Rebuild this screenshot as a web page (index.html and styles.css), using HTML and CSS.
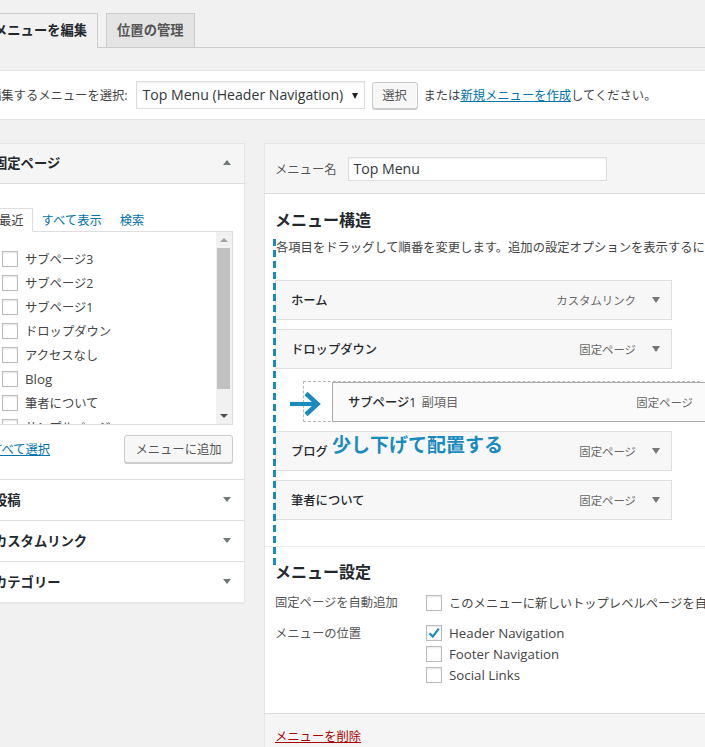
FILE: index.html
```html
<!DOCTYPE html>
<html lang="ja">
<head>
<meta charset="utf-8">
<title>メニュー</title>
<link rel="stylesheet" href="styles.css">
</head>
<body>
<div class="wrap">
  <div class="tabs">
    <a class="tab active">メニューを編集</a>
    <a class="tab">位置の管理</a>
  </div>

  <div class="manage">
    <span class="manage-label">編集するメニューを選択:</span>
    <div class="select">Top Menu (Header Navigation)<span class="select-arrow"></span></div>
    <span class="btn btn-select">選択</span>
    <span class="manage-text">または<a class="link">新規メニューを作成</a>してください。</span>
  </div>

  <div class="columns">
    <div class="side">
      <div class="acc">
        <div class="acc-title open">固定ページ<span class="caret up"></span></div>
        <div class="acc-content">
          <div class="ptabs">
            <span class="ptab active">最近</span>
            <a class="ptab">すべて表示</a>
            <a class="ptab">検索</a>
          </div>
          <div class="plist">
            <ul class="plist-items">
              <li><span class="cb"></span>サブページ3</li>
              <li><span class="cb"></span>サブページ2</li>
              <li><span class="cb"></span>サブページ1</li>
              <li><span class="cb"></span>ドロップダウン</li>
              <li><span class="cb"></span>アクセスなし</li>
              <li class="en"><span class="cb"></span>Blog</li>
              <li><span class="cb"></span>筆者について</li>
              <li><span class="cb"></span>サンプルページ</li>
            </ul>
            <div class="scrollbar">
              <div class="sb-btn"><span class="sb-up"></span></div>
              <div class="sb-thumb"></div>
              <div class="sb-btn sb-bottom"><span class="sb-down"></span></div>
            </div>
          </div>
          <div class="pactions">
            <a class="link">すべて選択</a>
            <span class="btn btn-add">メニューに追加</span>
          </div>
        </div>
      </div>
      <div class="acc"><div class="acc-title">投稿<span class="caret"></span></div></div>
      <div class="acc"><div class="acc-title">カスタムリンク<span class="caret"></span></div></div>
      <div class="acc last"><div class="acc-title">カテゴリー<span class="caret"></span></div></div>
    </div>

    <div class="main">
      <div class="main-header">
        <span class="name-label">メニュー名</span>
        <div class="name-input">Top Menu</div>
      </div>
      <div class="main-body">
        <div class="structure">
          <h3 class="heading">メニュー構造</h3>
          <p class="desc">各項目をドラッグして順番を変更します。追加の設定オプションを表示するには、項目の右側にある矢印をクリックしてください。</p>
          <ul class="menu">
            <li class="item"><span class="item-title">ホーム</span><span class="item-type">カスタムリンク</span><span class="item-arrow"></span></li>
            <li class="item"><span class="item-title">ドロップダウン</span><span class="item-type">固定ページ</span><span class="item-arrow"></span></li>
            <li class="drag-row">
              <div class="placeholder"></div>
              <div class="item dragged"><span class="item-title">サブページ1 <span class="sub">副項目</span></span><span class="item-type">固定ページ</span><span class="item-arrow"></span></div>
            </li>
            <li class="item after-drag"><span class="item-title">ブログ</span><span class="item-type">固定ページ</span><span class="item-arrow"></span></li>
            <li class="item"><span class="item-title">筆者について</span><span class="item-type">固定ページ</span><span class="item-arrow"></span></li>
          </ul>
        </div>
        <div class="settings">
          <h3 class="heading">メニュー設定</h3>
          <div class="set-row first">
            <span class="set-label">固定ページを自動追加</span>
            <div class="set-opts">
              <div class="opt"><span class="cb"></span>このメニューに新しいトップレベルページを自動的に追加</div>
            </div>
          </div>
          <div class="set-row">
            <span class="set-label">メニューの位置</span>
            <div class="set-opts">
              <div class="opt en"><span class="cb checked"><svg viewBox="0 0 16 16" width="16" height="16"><path d="M3.5 8.2 L6.8 11.6 L12.8 3.6" fill="none" stroke="#1e8cbe" stroke-width="2.2"/></svg></span>Header Navigation</div>
              <div class="opt en"><span class="cb"></span>Footer Navigation</div>
              <div class="opt en"><span class="cb"></span>Social Links</div>
            </div>
          </div>
        </div>

        <div class="dash-guide"></div>
        <svg class="guide-arrow" viewBox="0 0 32 26" width="32" height="26"><path d="M1 13 H27" stroke="#1a8bbd" stroke-width="4.2" fill="none"/><path d="M17 2.5 L28.5 13 L17 23.5" stroke="#1a8bbd" stroke-width="4.5" fill="none"/></svg>
        <div class="guide-note">少し下げて配置する</div>
      </div>
      <div class="main-footer"><a class="delete">メニューを削除</a></div>
    </div>
  </div>
</div>
</body>
</html>
```

FILE: styles.css
```css
* { box-sizing: border-box; }
html, body { margin: 0; padding: 0; overflow: hidden; }
body {
  width: 705px;
  height: 747px;
  background: #f1f1f1;
  font-family: "Open Sans", "Noto Sans CJK JP", sans-serif;
  font-size: 12.3px;
  color: #444;
}
ul { list-style: none; margin: 0; padding: 0; }
.link { color: #0073aa; text-decoration: underline; }
.en { font-size: 13.3px; }

.wrap { margin-left: -20px; width: 820px; }

/* top tabs */
.tabs {
  display: flex;
  align-items: flex-start;
  height: 48px;
  padding: 13px 0 0 3px;
  border-bottom: 1px solid #ccc;
}
.tab {
  height: 34px;
  line-height: 33px;
  padding: 0 10px;
  border: 1px solid #ccc;
  border-bottom: none;
  background: #e4e4e4;
  font-size: 13.3px;
  font-weight: 700;
  color: #555;
}
.tab.active {
  height: 35px;
  background: #f1f1f1;
  color: #23282d;
}
.tab + .tab { margin-left: 8px; }

/* manage bar */
.manage {
  display: flex;
  align-items: center;
  height: 50px;
  margin-top: 22px;
  padding-left: 9px;
  background: #fff;
  border-top: 1px solid #e5e5e5;
  border-bottom: 1px solid #e5e5e5;
  white-space: nowrap;
}
.select {
  position: relative;
  width: 229px;
  height: 28px;
  margin-left: 8px;
  padding-left: 6px;
  line-height: 26px;
  font-size: 14.1px;
  color: #32373c;
  background: #fff;
  border: 1px solid #ddd;
  box-shadow: inset 0 1px 2px rgba(0,0,0,.07);
}
.select-arrow {
  position: absolute;
  right: 6px;
  top: 11px;
  border-left: 3.5px solid transparent;
  border-right: 3.5px solid transparent;
  border-top: 6px solid #222;
}
.btn {
  display: inline-flex;
  align-items: center;
  justify-content: center;
  height: 27px;
  background: #f7f7f7;
  border: 1px solid #ccc;
  border-radius: 3px;
  box-shadow: 0 1px 0 #ccc;
  color: #555;
  font-size: 12.3px;
}
.btn-select { width: 46px; margin-left: 7px; }
.manage-text { margin-left: 6px; }

/* columns */
.columns {
  display: flex;
  align-items: flex-start;
  margin-top: 23px;
}
.side {
  width: 265px;
  flex: none;
  background: #fff;
  border: 1px solid #e5e5e5;
  box-shadow: 0 1px 1px rgba(0,0,0,.04);
}
.acc { border-bottom: 1px solid #ddd; }
.acc.last { border-bottom: none; }
.acc-title {
  display: flex;
  align-items: center;
  justify-content: space-between;
  height: 40px;
  padding: 0 13px 1px 13px;
  font-size: 13.3px;
  font-weight: 700;
  color: #23282d;
  background: #fff;
}
.acc-title.open {
  height: 40px;
  padding-bottom: 2px;
  background: #f5f5f5;
  border-bottom: 1px solid #ddd;
}
.caret {
  width: 0; height: 0;
  border-left: 4px solid transparent;
  border-right: 4px solid transparent;
  border-top: 5px solid #72777c;
}
.caret.up {
  border-top: none;
  border-bottom: 5px solid #72777c;
}
.acc-content {
  padding: 24px 11px 16px 9px;
}
.ptabs {
  display: flex;
  height: 24px;
  position: relative;
  z-index: 1;
}
.ptab {
  height: 24px;
  line-height: 23px;
  padding: 0 8px;
  color: #0073aa;
  border: 1px solid transparent;
}
.ptab.active {
  color: #444;
  background: #fff;
  border-color: #ddd;
  border-bottom-color: #fff;
}
.plist {
  display: flex;
  height: 194px;
  margin-top: -1px;
  border: 1px solid #ddd;
  overflow: hidden;
}
.plist-items {
  flex: 1;
  padding: 15px 0 0 11px;
}
.plist-items li {
  display: flex;
  align-items: center;
  height: 24px;
  white-space: nowrap;
}
.cb {
  display: inline-block;
  flex: none;
  width: 16px;
  height: 16px;
  margin-right: 7px;
  background: #fff;
  border: 1px solid #bbb;
  box-shadow: inset 0 1px 2px rgba(0,0,0,.1);
}
.cb svg { display: block; margin: -1px 0 0 -1px; }
.scrollbar {
  width: 16px;
  flex: none;
  display: flex;
  flex-direction: column;
  background: #f1f1f1;
}
.sb-btn {
  height: 16px;
  display: flex;
  align-items: center;
  justify-content: center;
}
.sb-bottom { margin-top: auto; }
.sb-up {
  border-left: 4px solid transparent;
  border-right: 4px solid transparent;
  border-bottom: 4px solid #a3a3a3;
}
.sb-down {
  border-left: 4px solid transparent;
  border-right: 4px solid transparent;
  border-top: 4px solid #505050;
}
.sb-thumb {
  height: 141px;
  margin: 0 2px 0 1px;
  background: #c1c1c1;
}
.pactions {
  display: flex;
  align-items: center;
  justify-content: space-between;
  margin-top: 10px;
}
.btn-add { width: 109px; height: 28px; }

/* main panel */
.main {
  width: 470px;
  flex: none;
  margin-left: 19px;
  border: 1px solid #e5e5e5;
  box-shadow: 0 1px 1px rgba(0,0,0,.04);
}
.main-header {
  display: flex;
  align-items: center;
  height: 50px;
  padding-left: 10px;
  background: #f5f5f5;
  border-bottom: 1px solid #ddd;
}
.name-label { color: #555; }
.name-input {
  width: 259px;
  height: 24px;
  margin-left: 11px;
  padding-left: 5px;
  line-height: 22px;
  font-size: 14.1px;
  color: #32373c;
  background: #fff;
  border: 1px solid #ddd;
  box-shadow: inset 0 1px 2px rgba(0,0,0,.07);
}
.main-body {
  position: relative;
  background: #fff;
}
.structure {
  padding: 16px 10px 26px 10px;
  border-bottom: 1px solid #eee;
}
.heading {
  margin: 0;
  font-size: 16px;
  line-height: 20px;
  font-weight: 700;
  color: #23282d;
}
.desc {
  margin: 8px 0 0 1px;
  line-height: 20px;
  white-space: nowrap;
}
.menu { margin-top: 22px; }
.item {
  display: flex;
  align-items: center;
  width: 397px;
  height: 40px;
  padding: 0 10px 0 15px;
  background: #f7f7f7;
  border: 1px solid #dfdfdf;
  white-space: nowrap;
}
.item + .item { margin-top: 9px; }
.item-title {
  flex: 1;
  font-weight: 500;
  color: #23282d;
}
.sub { font-weight: 400; color: #666; margin-left: 2px; }
.item-type {
  font-size: 11.4px;
  color: #666;
}
.item-arrow {
  margin-left: 16px;
  margin-right: 1px;
  border-left: 4px solid transparent;
  border-right: 4px solid transparent;
  border-top: 6px solid #72777c;
}
.drag-row {
  position: relative;
  height: 40px;
  margin-top: 12px;
}
.placeholder {
  margin-left: 28px;
  width: 397px;
  height: 41px;
  border: 1px dashed #bbb;
}
.item.dragged {
  position: absolute;
  left: 57px;
  top: 1px;
  background: #fafafa;
  border-color: #aaa;
}
.item.after-drag { margin-top: 10px; }

.settings {
  padding: 15px 10px 28px 10px;
}
.set-row {
  display: flex;
  margin-top: 11px;
  white-space: nowrap;
}
.set-label {
  width: 151px;
  flex: none;
  line-height: 20px;
  color: #555;
}
.set-row.first .opt { height: 20px; }
.set-row + .set-row .set-opts { margin-top: -2px; }
.opt {
  display: flex;
  align-items: center;
  height: 21px;
}
.dash-guide {
  position: absolute;
  left: 8px;
  top: 45px;
  width: 3px;
  height: 330px;
  background: repeating-linear-gradient(to bottom, #1a8bbd 0 7px, transparent 7px 11px);
}
.guide-arrow {
  position: absolute;
  left: 24px;
  top: 197px;
}
.guide-note {
  position: absolute;
  left: 67px;
  top: 239px;
  font-size: 19px;
  line-height: 24px;
  font-weight: 700;
  color: #1a8bbd;
  white-space: nowrap;
}
.main-footer {
  height: 40px;
  padding: 13px 0 0 10px;
  background: #f5f5f5;
  border-top: 1px solid #ddd;
}
.delete { color: #a00; text-decoration: underline; line-height: 20px; }
```
